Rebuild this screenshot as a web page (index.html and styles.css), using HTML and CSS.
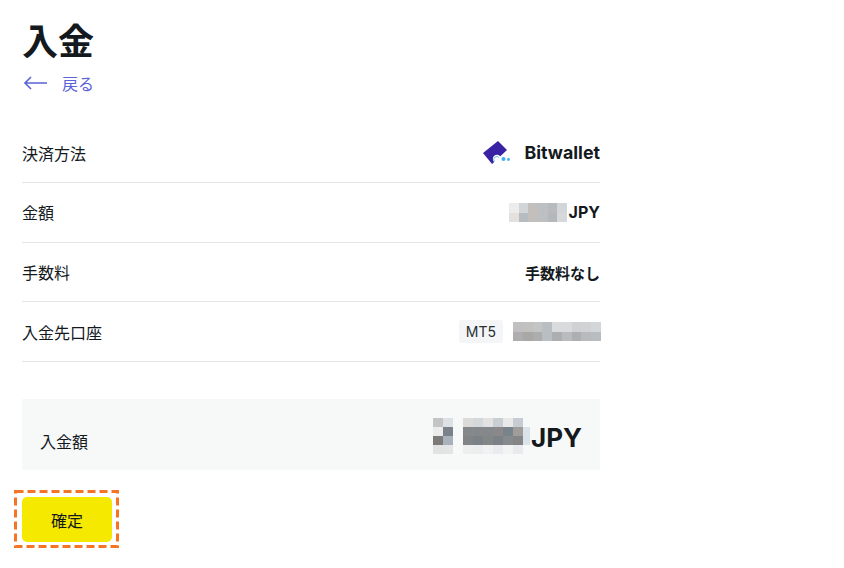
FILE: index.html
```html
<!DOCTYPE html>
<html lang="ja">
<head>
<meta charset="utf-8">
<title>入金</title>
<link rel="stylesheet" href="styles.css">
</head>
<body>
<main class="page">
  <h1 class="title">入金</h1>
  <a class="back" href="#">
    <svg class="back-icon" width="24" height="14" viewBox="0 0 24 14"><path d="M24 7H2M8 1L2 7l6 6" fill="none" stroke="#5a63d8" stroke-width="1.6"/></svg>
    <span>戻る</span>
  </a>
  <dl class="rows">
    <div class="row">
      <dt>決済方法</dt>
      <dd class="brand">
        <svg width="28" height="25" viewBox="0 0 28 25"><path d="M0 13L15 1l9 9-15 14L0 13z" fill="#3a22a5"/><circle cx="14" cy="19" r="4.200" fill="#fff"/><path d="M11.500 21.500a3 3 0 0 1 4.500-4" fill="none" stroke="#6cc4f0" stroke-width="1"/><circle cx="20.500" cy="19" r="2" fill="#3fb0f0"/><circle cx="25.500" cy="19.500" r="1.400" fill="#3fb0f0"/></svg>
        <strong class="brand-name">Bitwallet</strong>
      </dd>
    </div>
    <div class="row">
      <dt>金額</dt>
      <dd class="value">
        <svg class="mosaic" width="58" height="19" viewBox="0 0 6 2" preserveAspectRatio="none" shape-rendering="crispEdges">
          <rect x="0" y="0" width="1" height="1" fill="#ececec"/><rect x="1" y="0" width="1" height="1" fill="#d2d5d8"/><rect x="2" y="0" width="1" height="1" fill="#c2bfbc"/><rect x="3" y="0" width="1" height="1" fill="#bcc0c3"/><rect x="4" y="0" width="1" height="1" fill="#b8bbbe"/><rect x="5" y="0" width="1" height="1" fill="#d3d6d8"/>
          <rect x="0" y="1" width="1" height="1" fill="#e3e0dd"/><rect x="1" y="1" width="1" height="1" fill="#b7bcc0"/><rect x="2" y="1" width="1" height="1" fill="#c2bfbc"/><rect x="3" y="1" width="1" height="1" fill="#bcc0c3"/><rect x="4" y="1" width="1" height="1" fill="#b5b7ba"/><rect x="5" y="1" width="1" height="1" fill="#d6d9db"/>
        </svg>
        <strong class="unit">JPY</strong>
      </dd>
    </div>
    <div class="row">
      <dt>手数料</dt>
      <dd class="value"><strong>手数料なし</strong></dd>
    </div>
    <div class="row">
      <dt>入金先口座</dt>
      <dd class="account">
        <span class="tag">MT5</span>
        <svg class="mosaic" width="88" height="19" viewBox="0 0 9 2" preserveAspectRatio="none" shape-rendering="crispEdges">
          <rect x="0" y="0" width="1" height="1" fill="#c0c0c2"/><rect x="1" y="0" width="1" height="1" fill="#c2c1bf"/><rect x="2" y="0" width="1" height="1" fill="#c3c4c4"/><rect x="3" y="0" width="1" height="1" fill="#b9bec2"/><rect x="4" y="0" width="1" height="1" fill="#dadbdd"/><rect x="5" y="0" width="1" height="1" fill="#d8dadb"/><rect x="6" y="0" width="1" height="1" fill="#d0d1d2"/><rect x="7" y="0" width="1" height="1" fill="#d0d2d3"/><rect x="8" y="0" width="1" height="1" fill="#d4d7d9"/>
          <rect x="0" y="1" width="1" height="1" fill="#aeaeb0"/><rect x="1" y="1" width="1" height="1" fill="#a9a8a7"/><rect x="2" y="1" width="1" height="1" fill="#adadad"/><rect x="3" y="1" width="1" height="1" fill="#b9bec2"/><rect x="4" y="1" width="1" height="1" fill="#acaeb0"/><rect x="5" y="1" width="1" height="1" fill="#b8bcbf"/><rect x="6" y="1" width="1" height="1" fill="#aeafb0"/><rect x="7" y="1" width="1" height="1" fill="#b7bbbe"/><rect x="8" y="1" width="1" height="1" fill="#babdc0"/>
        </svg>
      </dd>
    </div>
  </dl>
  <section class="total">
    <span class="total-label">入金額</span>
    <div class="total-value">
      <svg class="mosaic" width="97" height="36" viewBox="0 0 97 36" shape-rendering="crispEdges">
        <rect x="0" y="0" width="10" height="9" fill="#c4c4c4"/><rect x="10" y="0" width="10" height="9" fill="#dde1e5"/>
        <rect x="0" y="9" width="10" height="9" fill="#ececec"/><rect x="10" y="9" width="10" height="9" fill="#79818a"/>
        <rect x="0" y="18" width="10" height="9" fill="#7b7a78"/><rect x="10" y="18" width="10" height="9" fill="#a9b2ba"/>
        <rect x="0" y="27" width="10" height="9" fill="#e2e2e2"/><rect x="10" y="27" width="10" height="9" fill="#e2e4e6"/>
        <rect x="30" y="0" width="10" height="9" fill="#dcdbd9"/><rect x="40" y="0" width="10" height="9" fill="#d5d8db"/><rect x="50" y="0" width="10" height="9" fill="#e2e2e2"/><rect x="60" y="0" width="10" height="9" fill="#c9ced2"/><rect x="70" y="0" width="10" height="9" fill="#e9e9e9"/><rect x="80" y="0" width="10" height="9" fill="#c6ccd1"/>
        <rect x="30" y="9" width="10" height="9" fill="#85888b"/><rect x="40" y="9" width="10" height="9" fill="#85888b"/><rect x="50" y="9" width="10" height="9" fill="#85888b"/><rect x="60" y="9" width="10" height="9" fill="#8a8889"/><rect x="70" y="9" width="10" height="9" fill="#79838c"/><rect x="80" y="9" width="10" height="9" fill="#a09c99"/>
        <rect x="30" y="18" width="10" height="9" fill="#808487"/><rect x="40" y="18" width="10" height="9" fill="#7a8287"/><rect x="50" y="18" width="10" height="9" fill="#828687"/><rect x="60" y="18" width="10" height="9" fill="#7c8186"/><rect x="70" y="18" width="10" height="9" fill="#868a8d"/><rect x="80" y="18" width="10" height="9" fill="#858585"/>
        <rect x="30" y="27" width="10" height="9" fill="#eeeeee"/><rect x="40" y="27" width="10" height="9" fill="#ebedef"/><rect x="50" y="27" width="10" height="9" fill="#f1f1f1"/><rect x="60" y="27" width="10" height="9" fill="#e9ebee"/><rect x="70" y="27" width="10" height="9" fill="#f3f3f3"/><rect x="80" y="27" width="10" height="9" fill="#e9eaee"/>
        <rect x="90" y="9" width="7" height="18" fill="#dbe3ea"/>
      </svg>
      <strong class="total-unit">JPY</strong>
    </div>
  </section>
  <div class="action">
    <svg class="dash" width="105" height="58" viewBox="0 0 105 58"><rect x="1.500" y="1.500" width="102" height="55" fill="none" stroke="#f47525" stroke-width="3" stroke-dasharray="8 4"/></svg>
    <button class="confirm" type="button">確定</button>
  </div>
</main>
</body>
</html>
```
FILE: styles.css
```css
* { box-sizing: border-box; }
html, body { margin: 0; padding: 0; background: #fff; }
body {
  font-family: Inter, "Noto Sans CJK JP", "Noto Sans", sans-serif;
  color: #14191e;
  font-size: 16px;
}
.page { width: 600px; padding: 17px 0 0 22px; }
.title { margin: 0; font-size: 36px; line-height: 50px; font-weight: 700; }
.back {
  display: flex;
  align-items: center;
  gap: 15px;
  height: 24px;
  margin: 4px 0 0 1px;
  color: #5a63d8;
  font-size: 16px;
  text-decoration: none;
}
.back-icon { display: block; }
.rows { margin: 28.400px 0 0; }
.row {
  display: flex;
  justify-content: space-between;
  align-items: center;
  height: 59.670px;
  border-bottom: 1px solid #e4e5e5;
}
.row dt { font-size: 16px; }
.row dd { margin: 0; display: flex; align-items: center; font-size: 15px; }
.row strong { font-weight: 700; }
.row .brand { gap: 13px; }
.row .brand-name { font-size: 17.800px; }
.row .unit { font-size: 16px; }
.value { gap: 2px; }
.mosaic { display: block; }
.row .account { margin-right: -1px; gap: 10px; }
.tag {
  background: #f4f5f6;
  border-radius: 3px;
  padding: 0 7px;
  line-height: 23px;
  font-size: 14px;
  color: #2a2f33;
}
.total {
  display: flex;
  justify-content: space-between;
  align-items: center;
  height: 71px;
  margin-top: 37px;
  padding: 0 18px;
  background: #f7f9f9;
}
.total-label { font-size: 16px; padding-top: 12px; }
.total-value { display: flex; align-items: center; gap: 1px; padding-top: 6px; }
.total-value .mosaic { margin-top: -4px; }
.total-unit { font-size: 26px; font-weight: 700; }
.action {
  position: relative;
  display: block;
  width: 105px;
  height: 58px;
  margin: 20px 0 0 -8px;
  padding: 7px 0 0 8px;
}
.dash { position: absolute; left: 0; top: 0; }
.confirm {
  display: block;
  width: 90px;
  height: 45px;
  border: 0;
  border-radius: 5px;
  background: #f5e900;
  color: #14191e;
  font: inherit;
  font-size: 16px;
}
```
